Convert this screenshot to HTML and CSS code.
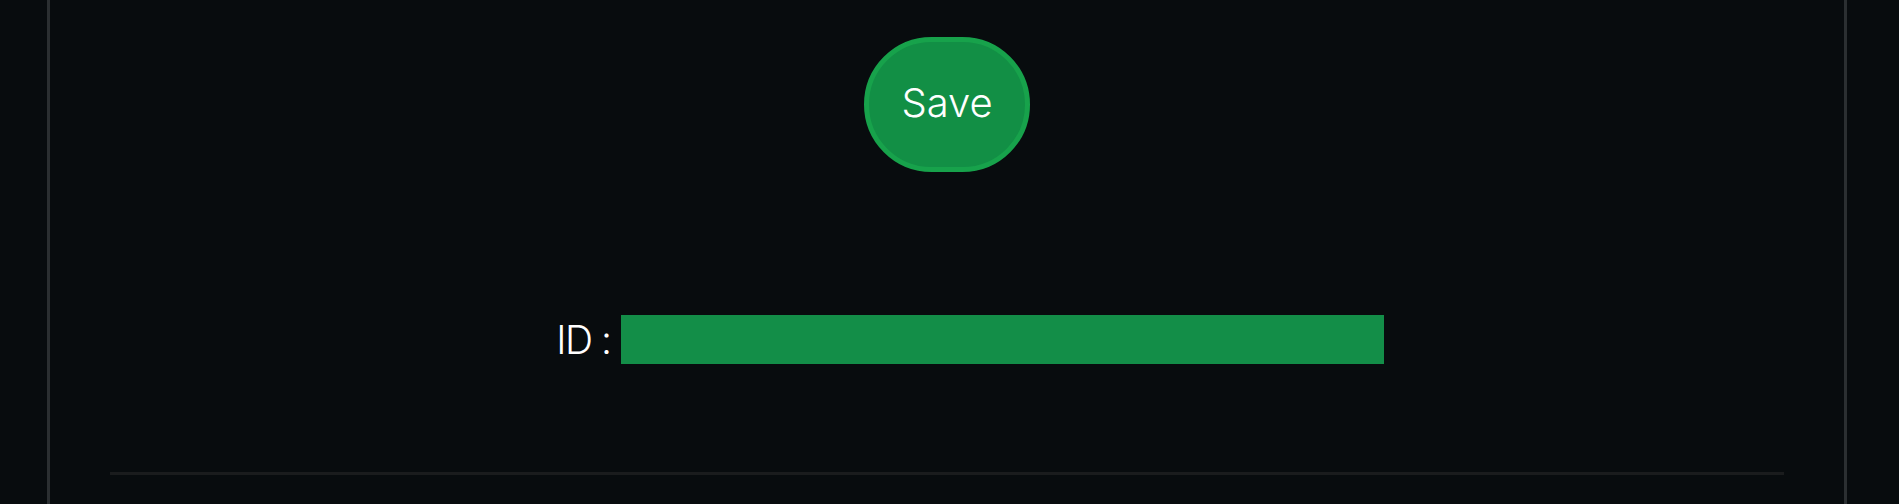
FILE: index.html
```html
<!DOCTYPE html>
<html>
<head>
<meta charset="utf-8">
<link rel="stylesheet" href="styles.css">
</head>
<body>
<div class="frame">
  <div class="actions">
    <button class="save-btn">Save</button>
  </div>
  <div class="id-row">
    <span class="id-label">ID :</span>
    <div class="id-value"></div>
  </div>
  <div class="divider"></div>
</div>
</body>
</html>
```

FILE: styles.css
```css
html, body {
  margin: 0;
  padding: 0;
  background: #080c0e;
  height: 504px;
  overflow: hidden;
}
.frame {
  margin: 0 52px 0 47px;
  height: 504px;
  border-left: 3px solid #2b2f31;
  border-right: 3px solid #2b2f31;
  box-sizing: border-box;
  display: flex;
  flex-direction: column;
  align-items: center;
  font-family: "Inter", "Open Sans", sans-serif;
  color: #ffffff;
}
.actions {
  padding-top: 37px;
  display: flex;
  justify-content: center;
}
.save-btn {
  width: 166px;
  height: 135px;
  border-radius: 9999px;
  border: 5px solid #17a24b;
  background: #128f45;
  color: #ffffff;
  font-family: "Inter", "Open Sans", sans-serif;
  font-weight: 300;
  font-size: 40px;
  padding: 0 0 4px 0;
}
.id-row {
  margin-top: 143px;
  display: flex;
  align-items: center;
  gap: 10px;
  padding-left: 46px;
}
.id-label {
  font-size: 39px;
  font-weight: 300;
  line-height: 49px;
  letter-spacing: -1.5px;
}
.id-value {
  width: 763px;
  height: 49px;
  background: #138e48;
}
.divider {
  margin-top: 108px;
  align-self: stretch;
  margin-left: 60px;
  margin-right: 60px;
  height: 3px;
  background: #1a1c1d;
}
```
